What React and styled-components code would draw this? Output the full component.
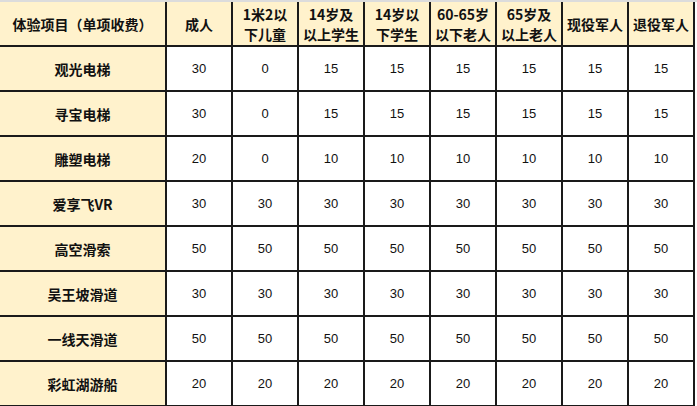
import React from 'react'
import styled, { createGlobalStyle } from 'styled-components'

const GlobalStyle = createGlobalStyle`
  body {
    margin: 0;
    background: #fff;
    font-family: "Liberation Sans", "Noto Sans CJK SC", sans-serif;
  }
`

const Page = styled.div`
  border-top: 2px solid #dcdcdc;
  width: 697px;
  height: 404px;
  overflow: hidden;
`

const Table = styled.table`
  border-collapse: collapse;
  table-layout: fixed;
  width: 695px;
`

const HeadCell = styled.th`
  background: #fff2cc;
  height: 43px;
  padding: 0;
  border-right: 2px solid #1a1a1a;
  border-bottom: 2px solid #1a1a1a;
  font-family: "Noto Sans CJK SC", sans-serif;
  font-weight: bold;
  font-size: 14px;
  line-height: 20px;
  color: #111;
  text-align: center;
  white-space: pre-line;
`

const NameCell = styled.th`
  background: #fff2cc;
  height: 43px;
  padding: 0;
  border-right: 2px solid #1a1a1a;
  border-bottom: 2px solid #1a1a1a;
  font-family: "Noto Sans CJK SC", sans-serif;
  font-weight: bold;
  font-size: 14px;
  color: #111;
  text-align: center;
`

const Cell = styled.td`
  background: #fff;
  height: 43px;
  padding: 0;
  border-right: 2px solid #1a1a1a;
  border-bottom: 2px solid #1a1a1a;
  font-family: "Liberation Sans", sans-serif;
  font-size: 13px;
  color: #111;
  text-align: center;
`

const columns = [
  '成人',
  '1米2以\n下儿童',
  '14岁及\n以上学生',
  '14岁以\n下学生',
  '60-65岁\n以下老人',
  '65岁及\n以上老人',
  '现役军人',
  '退役军人',
]

const rows = [
  ['观光电梯', 30, 0, 15, 15, 15, 15, 15, 15],
  ['寻宝电梯', 30, 0, 15, 15, 15, 15, 15, 15],
  ['雕塑电梯', 20, 0, 10, 10, 10, 10, 10, 10],
  ['爱享飞VR', 30, 30, 30, 30, 30, 30, 30, 30],
  ['高空滑索', 50, 50, 50, 50, 50, 50, 50, 50],
  ['吴王坡滑道', 30, 30, 30, 30, 30, 30, 30, 30],
  ['一线天滑道', 50, 50, 50, 50, 50, 50, 50, 50],
  ['彩虹湖游船', 20, 20, 20, 20, 20, 20, 20, 20],
]

const App = () => {
  return (
    <Page>
      <GlobalStyle />
      <Table>
        <colgroup>
          <col style={{ width: 166 }} />
          {columns.map((c) => (
            <col key={c} style={{ width: 66 }} />
          ))}
        </colgroup>
        <thead>
          <tr>
            <HeadCell>体验项目（单项收费）</HeadCell>
            {columns.map((c) => (
              <HeadCell key={c}>{c}</HeadCell>
            ))}
          </tr>
        </thead>
        <tbody>
          {rows.map(([name, ...prices]) => (
            <tr key={name}>
              <NameCell>{name}</NameCell>
              {prices.map((p, i) => (
                <Cell key={i}>{p}</Cell>
              ))}
            </tr>
          ))}
        </tbody>
      </Table>
    </Page>
  )
}

export default App
